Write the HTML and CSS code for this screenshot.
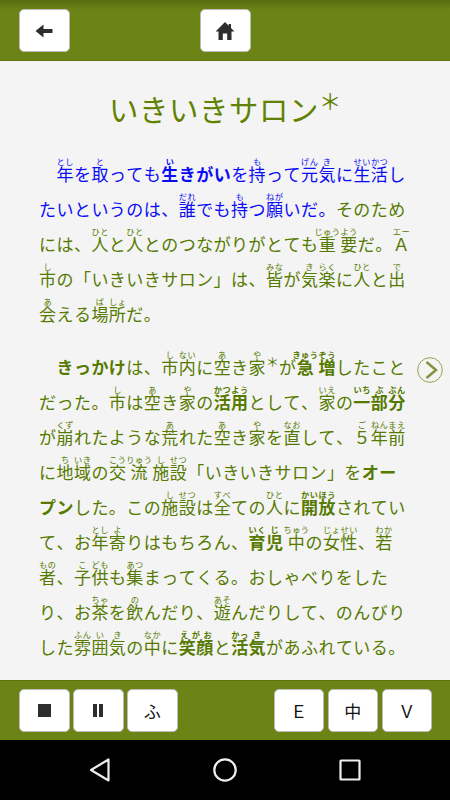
FILE: index.html
```html
<!DOCTYPE html>
<html lang="ja">
<head>
    <meta charset="UTF-8">
    <meta name="viewport" content="width=device-width, initial-scale=1.0">
    <title>いきいきサロン</title>
    <link rel="stylesheet" href="styles.css">
</head>
<body>
    <header class="bar top-bar">
        <button class="btn" aria-label="戻る">
            <svg width="18" height="14" viewBox="0 0 18 14"><path d="M0.5 7L8.5 0.5V5H17.5V9H8.5V13.5Z"/></svg>
        </button>
        <button class="btn home" aria-label="ホーム">
            <svg width="18" height="18" viewBox="0 0 18 18"><path d="M9 0L12.7 3.7V2H15V6L18 9V9.6H15.5V18H11.2V11.5H6.8V18H2.5V9.6H0V9Z"/></svg>
        </button>
    </header>

    <main class="page">
        <h1>いきいきサロン<span class="note">＊</span></h1>
        <p>　<span class="reading"><ruby>年<rt>とし</rt></ruby>を<ruby>取<rt>と</rt></ruby>っても<b><ruby>生<rt>い</rt></ruby>きがい</b>を<ruby>持<rt>も</rt></ruby>って<ruby>元<rt>げん</rt></ruby><ruby>気<rt>き</rt></ruby>に<ruby>生活<rt>せいかつ</rt></ruby>し<br>
            たいというのは、<ruby>誰<rt>だれ</rt></ruby>でも<ruby>持<rt>も</rt></ruby>つ<ruby>願<rt>ねが</rt></ruby>いだ。</span>そのため<br>
            には、<ruby>人<rt>ひと</rt></ruby>と<ruby>人<rt>ひと</rt></ruby>とのつながりがとても<ruby>重<rt>じゅう</rt></ruby><ruby>要<rt>よう</rt></ruby>だ。<ruby>Ａ<rt>エー</rt></ruby><br>
            <ruby>市<rt>し</rt></ruby>の「いきいきサロン」は、<ruby>皆<rt>みな</rt></ruby>が<ruby>気<rt>き</rt></ruby><ruby>楽<rt>らく</rt></ruby>に<ruby>人<rt>ひと</rt></ruby>と<ruby>出<rt>で</rt></ruby><br>
            <ruby>会<rt>あ</rt></ruby>える<ruby>場<rt>ば</rt></ruby><ruby>所<rt>しょ</rt></ruby>だ。</p>
        <p>　<b>きっかけ</b>は、<ruby>市<rt>し</rt></ruby><ruby>内<rt>ない</rt></ruby>に<ruby>空<rt>あ</rt></ruby>き<ruby>家<rt>や</rt></ruby><span class="note">＊</span>が<b><ruby>急<rt>きゅう</rt></ruby><ruby>増<rt>ぞう</rt></ruby></b>したこと<br>
            だった。<ruby>市<rt>し</rt></ruby>は<ruby>空<rt>あ</rt></ruby>き<ruby>家<rt>や</rt></ruby>の<b><ruby>活用<rt>かつよう</rt></ruby></b>として、<ruby>家<rt>いえ</rt></ruby>の<b><ruby>一<rt>いち</rt></ruby><ruby>部<rt>ぶ</rt></ruby><ruby>分<rt>ぶん</rt></ruby></b><br>
            が<ruby>崩<rt>くず</rt></ruby>れたような<ruby>荒<rt>あ</rt></ruby>れた<ruby>空<rt>あ</rt></ruby>き<ruby>家<rt>や</rt></ruby>を<ruby>直<rt>なお</rt></ruby>して、<ruby>５<rt>ご</rt></ruby><ruby>年<rt>ねん</rt></ruby><ruby>前<rt>まえ</rt></ruby><br>
            に<ruby>地<rt>ち</rt></ruby><ruby>域<rt>いき</rt></ruby>の<ruby>交<rt>こう</rt></ruby><ruby>流<rt>りゅう</rt></ruby><ruby>施<rt>し</rt></ruby><ruby>設<rt>せつ</rt></ruby>「いきいきサロン」を<b>オー</b><br>
            <b>プン</b>した。この<ruby>施<rt>し</rt></ruby><ruby>設<rt>せつ</rt></ruby>は<ruby>全<rt>すべ</rt></ruby>ての<ruby>人<rt>ひと</rt></ruby>に<b><ruby>開放<rt>かいほう</rt></ruby></b>されてい<br>
            て、お<ruby>年<rt>とし</rt></ruby><ruby>寄<rt>よ</rt></ruby>りはもちろん、<b><ruby>育<rt>いく</rt></ruby><ruby>児<rt>じ</rt></ruby></b><ruby>中<rt>ちゅう</rt></ruby>の<ruby>女性<rt>じょせい</rt></ruby>、<ruby>若<rt>わか</rt></ruby><br>
            <ruby>者<rt>もの</rt></ruby>、<ruby>子<rt>こ</rt></ruby><ruby>供<rt>ども</rt></ruby>も<ruby>集<rt>あつ</rt></ruby>まってくる。おしゃべりをした<br>
            り、お<ruby>茶<rt>ちゃ</rt></ruby>を<ruby>飲<rt>の</rt></ruby>んだり、<ruby>遊<rt>あそ</rt></ruby>んだりして、のんびり<br>
            した<ruby>雰<rt>ふん</rt></ruby><ruby>囲<rt>い</rt></ruby><ruby>気<rt>き</rt></ruby>の<ruby>中<rt>なか</rt></ruby>に<b><ruby>笑顔<rt>えがお</rt></ruby></b>と<b><ruby>活<rt>かっ</rt></ruby><ruby>気<rt>き</rt></ruby></b>があふれている。</p>
        <button class="next" aria-label="次へ">
            <svg width="26" height="26" viewBox="0 0 26 26"><circle cx="13" cy="13" r="12.3"/><path d="M9.5 5L19 13L9.5 21"/></svg>
        </button>
    </main>

    <footer class="bar bottom-bar">
        <div class="group">
            <button class="btn" aria-label="停止"><svg width="13" height="13" viewBox="0 0 13 13"><path d="M0 0H13V13H0Z"/></svg></button>
            <button class="btn" aria-label="一時停止"><svg width="10" height="13" viewBox="0 0 10 13"><path d="M0 0H4V13H0ZM6 0H10V13H6Z"/></svg></button>
            <button class="btn">ふ</button>
        </div>
        <div class="group">
            <button class="btn">Ｅ</button>
            <button class="btn">中</button>
            <button class="btn">Ｖ</button>
        </div>
    </footer>

    <nav class="system-nav">
        <svg width="24" height="26" viewBox="0 0 24 26"><path d="M3 13L20.5 2.5V23.5Z"/></svg>
        <svg width="26" height="26" viewBox="0 0 26 26"><circle cx="13" cy="13" r="10.7"/></svg>
        <svg width="24" height="26" viewBox="0 0 24 26"><rect x="2.5" y="3.5" width="19" height="19" rx="0.5"/></svg>
    </nav>
</body>
</html>
```

FILE: styles.css
```css
body {
    margin: 0;
    width: 450px;
    height: 800px;
    display: flex;
    flex-direction: column;
    overflow: hidden;
    background-color: #f4f4f4;
    color: #567a00;
    font-family: "Noto Sans CJK JP", sans-serif;
    font-kerning: none;
}
.bar {
    box-sizing: border-box;
    display: flex;
    flex: none;
    padding: 0 18px 0 19px;
    background-color: #6c8416;
}
.top-bar {
    height: 61px;
    padding-top: 9px;
    background-image: linear-gradient(rgba(0,0,0,0.18), rgba(0,0,0,0) 10px);
    border-bottom: 1px solid #5d750a;
}
.bottom-bar {
    height: 60px;
    padding-top: 8px;
    justify-content: space-between;
    border-top: 1px solid #5d750a;
}
.group {
    display: flex;
    gap: 3.5px;
}
.btn {
    box-sizing: border-box;
    width: 50.5px;
    height: 43px;
    padding: 0;
    display: flex;
    align-items: center;
    justify-content: center;
    background-color: #fff;
    border: 1px solid #bbb;
    border-radius: 5px;
    color: #111;
    font-family: inherit;
    font-size: 17px;
    line-height: 24px;
}
.btn svg {
    fill: #2d2d2d;
}
.home {
    margin-left: 130.5px;
}
.page {
    position: relative;
    flex: 1;
    padding-left: 39px;
    overflow: hidden;
}
h1 {
    margin: 27px 0 0 70px;
    height: 40px;
    line-height: 40px;
    font-size: 29.4px;
    font-weight: 400;
    letter-spacing: 0.6px;
    white-space: nowrap;
    color: #608200;
}
.note {
    font-size: 0.76em;
    line-height: 0;
    vertical-align: 11px;
}
p {
    margin: 28px 0 0;
    font-size: 17px;
    line-height: 35px;
    letter-spacing: 0.46px;
    white-space: nowrap;
}
p + p {
    margin-top: 18px;
}
p .note {
    letter-spacing: 0;
    vertical-align: 7px;
}
.reading {
    color: #0b0bf5;
}
rt {
    font-size: 8.2px;
    line-height: 8px;
}
.next {
    position: absolute;
    right: 7px;
    top: 296px;
    padding: 0;
    border: 0;
    background: none;
}
.next svg {
    display: block;
    fill: none;
    stroke: #98a04b;
    stroke-width: 1;
}
.next path {
    stroke: #87903c;
    stroke-width: 2.5;
}
.system-nav {
    flex: none;
    height: 60px;
    display: flex;
    align-items: center;
    justify-content: center;
    gap: 100px;
    background-color: #000;
}
.system-nav svg {
    fill: none;
    stroke: #eee;
    stroke-width: 2.2;
    stroke-linejoin: round;
}
```
